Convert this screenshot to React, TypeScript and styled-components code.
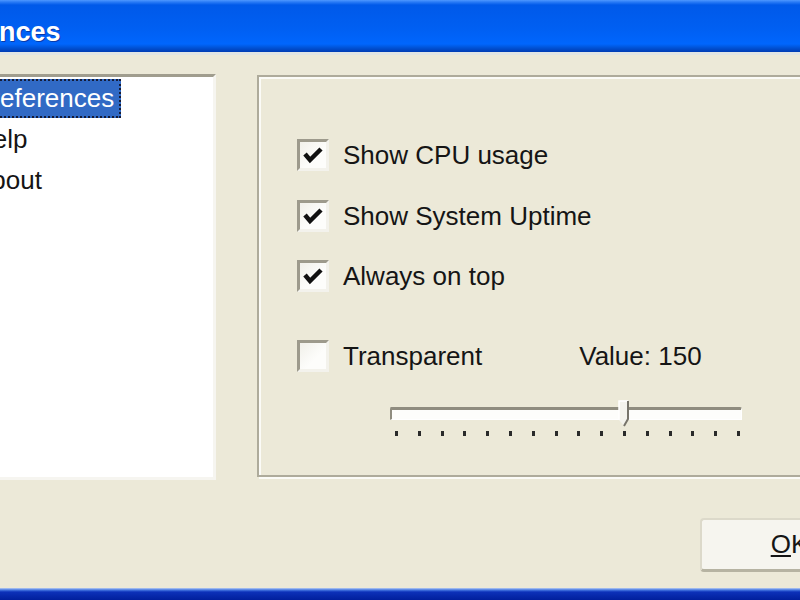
import React from 'react';
import styled, { createGlobalStyle } from 'styled-components';

const GlobalStyle = createGlobalStyle`
  html, body {
    margin: 0;
    padding: 0;
    overflow: hidden;
    background: #ece9d8;
  }
  body {
    font-family: 'Liberation Sans', Arial, sans-serif;
  }
`;

const Window = styled.div`
  display: flex;
  flex-direction: column;
  width: 1000px;
  height: 600px;
  margin-left: -100px;
  background: #ece9d8;
  color: #151515;
  font-size: 26px;
`;

const TitleBar = styled.div`
  height: 52px;
  box-sizing: border-box;
  display: flex;
  align-items: center;
  padding: 12px 0 0 6px;
  background: linear-gradient(
    to bottom,
    #4f98ff 0,
    #2a7bf6 2px,
    #0059e9 5px,
    #005ff2 28px,
    #0066fd 44px,
    #0057de 47px,
    #0046c2 50px,
    #003db4 52px
  );
`;

const Title = styled.span`
  font-size: 27px;
  font-weight: bold;
  color: #fff;
  text-shadow: 1px 1px 0 #0a3aa8;
`;

const Client = styled.div`
  flex: 1;
  display: flex;
  flex-direction: column;
  border-top: 3px solid #e1e5e4;
  padding: 19px 20px 0 66px;
`;

const MainRow = styled.div`
  display: flex;
  align-items: flex-start;
  gap: 41px;
`;

const ListBox = styled.ul`
  width: 250px;
  height: 406px;
  box-sizing: border-box;
  margin: 0;
  padding: 1px 0 0;
  list-style: none;
  background: #fff;
  border-style: solid;
  border-width: 3px;
  border-color: #a09d8e #f6f5f0 #f6f5f0 #a09d8e;
`;

const ListItem = styled.li`
  height: 41px;
  display: flex;
  align-items: center;
`;

const ItemText = styled.span<{ $selected?: boolean }>`
  height: 39px;
  box-sizing: border-box;
  line-height: 35px;
  padding: 0 5px 0 3px;
  border: 2px dotted ${(p) => (p.$selected ? '#141c38' : 'transparent')};
  background: ${(p) => (p.$selected ? '#316ac5' : 'transparent')};
  color: ${(p) => (p.$selected ? '#fff' : '#151515')};
`;

const Panel = styled.div`
  flex: 1;
  height: 402px;
  box-sizing: border-box;
  margin-top: 1px;
  padding: 62px 0 0 38px;
  display: flex;
  flex-direction: column;
  border: 2px solid #aeab9b;
  box-shadow: inset 2px 2px 0 #fbfbf7, 2px 2px 0 #fbfbf7;
`;

const CheckList = styled.div`
  display: flex;
  flex-direction: column;
  gap: 28.5px;
`;

const CheckRow = styled.label`
  display: flex;
  align-items: center;
  height: 32px;
  gap: 14px;
`;

const TransparentRow = styled(CheckRow)`
  margin-top: 48px;
`;

const Box = styled.span`
  width: 32px;
  height: 32px;
  box-sizing: border-box;
  display: flex;
  align-items: center;
  justify-content: center;
  border-style: solid;
  border-width: 3px;
  border-color: #9d9a8c #f3f2ec #f3f2ec #9d9a8c;
  background: linear-gradient(135deg, #f1f0ea 0%, #fdfdfb 60%);
`;

const Label = styled.span`
  line-height: 32px;
  white-space: nowrap;
`;

const ValueText = styled.span`
  margin-left: 83px;
  line-height: 32px;
  white-space: nowrap;
`;

const Slider = styled.div`
  position: relative;
  width: 352px;
  margin: 28px 0 0 93px;
`;

const Track = styled.div`
  margin-top: 7px;
  height: 13px;
  box-sizing: border-box;
  border-style: solid;
  border-width: 3px 1px 1px 2px;
  border-color: #8f8c7f #fff #fff #8f8c7f;
  border-radius: 2px 2px 0 0;
  background: #fdfdfb;
`;

const Thumb = styled.svg`
  position: absolute;
  top: 0;
  width: 12px;
  height: 27px;
  transform: translateX(-50%);
`;

const Ticks = styled.div`
  display: flex;
  justify-content: space-between;
  margin-top: 11px;
  padding: 0 2px 0 5px;
`;

const Tick = styled.span`
  width: 3px;
  height: 5px;
  background: #2a2a2a;
`;

const Footer = styled.div`
  display: flex;
  justify-content: flex-end;
  margin-top: 38px;
`;

const Button = styled.button`
  width: 180px;
  height: 54px;
  box-sizing: border-box;
  font-family: 'Liberation Sans', Arial, sans-serif;
  font-size: 26px;
  color: #151515;
  background: #f6f5ef;
  border-style: solid;
  border-width: 2px 3px 3px 2px;
  border-color: #dcd9ca #c9c6b6 #b6b3a2 #dcd9ca;
  border-radius: 4px;
`;

const BottomFrame = styled.div`
  height: 12px;
  background: linear-gradient(
    to bottom,
    #b9cdf2 0,
    #4577e2 2px,
    #0c31b9 4px,
    #001f9c 12px
  );
`;

const Check = () => (
  <svg width="22" height="20" viewBox="0 0 22 20">
    <polyline
      points="3,9 8,15 19,4"
      fill="none"
      stroke="#111"
      strokeWidth="4.5"
      strokeLinejoin="miter"
    />
  </svg>
);

const items = ['Preferences', 'Help', 'About'];
const options = [
  { label: 'Show CPU usage', checked: true },
  { label: 'Show System Uptime', checked: true },
  { label: 'Always on top', checked: true },
];

const min = 0;
const max = 225;
const value = 150;
const tickCount = 16;

export default function App() {
  const thumbLeft = 6 + ((value - min) / (max - min)) * 342;

  return (
    <>
      <GlobalStyle />
      <Window>
        <TitleBar>
          <Title>Preferences</Title>
        </TitleBar>
        <Client>
          <MainRow>
            <ListBox>
              {items.map((item, i) => (
                <ListItem key={item}>
                  <ItemText $selected={i === 0}>{item}</ItemText>
                </ListItem>
              ))}
            </ListBox>
            <Panel>
              <CheckList>
                {options.map((o) => (
                  <CheckRow key={o.label}>
                    <Box>{o.checked && <Check />}</Box>
                    <Label>{o.label}</Label>
                  </CheckRow>
                ))}
              </CheckList>
              <TransparentRow>
                <Box />
                <Label>Transparent</Label>
                <ValueText>Value: {value}</ValueText>
              </TransparentRow>
              <Slider>
                <Track />
                <Thumb viewBox="0 0 12 27" style={{ left: thumbLeft }}>
                  <path d="M1 1 H10 V19 L6 26 L1 20 Z" fill="#f4f3ec" />
                  <path d="M1 20 V1 H10" fill="none" stroke="#fff" strokeWidth="1.5" />
                  <path d="M10 1 V19 L6 26" fill="none" stroke="#77746a" strokeWidth="2" />
                </Thumb>
                <Ticks>
                  {Array.from({ length: tickCount }, (_, i) => (
                    <Tick key={i} />
                  ))}
                </Ticks>
              </Slider>
            </Panel>
          </MainRow>
          <Footer>
            <Button>
              <u>O</u>K
            </Button>
          </Footer>
        </Client>
        <BottomFrame />
      </Window>
    </>
  );
}
